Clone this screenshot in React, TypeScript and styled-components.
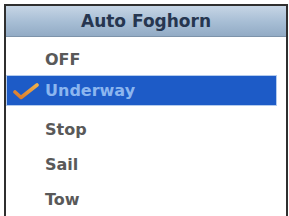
import styled, { createGlobalStyle } from 'styled-components';

const GlobalStyle = createGlobalStyle`
  html, body {
    margin: 0;
    padding: 0;
    background: #fff;
    overflow: hidden;
  }
`;

const Frame = styled.div`
  width: 280px;
  height: 214px;
  margin: 4px 0 0 4px;
  border: 2px solid #2f2f2f;
  border-bottom: none;
  background: #fff;
  font-family: 'DejaVu Sans', Verdana, sans-serif;
`;

const Header = styled.div`
  display: flex;
  align-items: center;
  justify-content: center;
  height: 30px;
  background: linear-gradient(#c6d5e5, #a6bdd4 55%, #92abc5);
  border-bottom: 1px solid #7d93aa;
  color: #263650;
  font-size: 17px;
  font-weight: 700;
`;

const List = styled.ul`
  list-style: none;
  margin: 0;
  padding: 5px 0 0;
`;

const Option = styled.li`
  display: flex;
  align-items: flex-start;
  height: 35px;
`;

const Label = styled.div<{ $active?: boolean }>`
  position: relative;
  display: flex;
  align-items: center;
  height: ${(p) => (p.$active ? '29px' : '35px')};
  margin: ${(p) => (p.$active ? '-1px 10px 0 1px' : '0 10px 0 1px')};
  padding-left: 38px;
  flex: 1;
  font-size: 16px;
  font-weight: 700;
  color: ${(p) => (p.$active ? '#8cb6ef' : '#595959')};
  background: ${(p) => (p.$active ? '#1d5bc7' : 'transparent')};
  box-shadow: ${(p) => (p.$active ? '0 0 0 1px #b3cbee' : 'none')};
`;

const Check = styled.svg`
  position: absolute;
  left: 6px;
  top: 7px;
`;

const options = ['OFF', 'Underway', 'Stop', 'Sail', 'Tow'];
const selected = 'Underway';

export default function App() {
  return (
    <>
      <GlobalStyle />
      <Frame>
        <Header>Auto Foghorn</Header>
        <List>
          {options.map((o) => (
            <Option key={o}>
              <Label $active={o === selected}>
                {o === selected && (
                  <Check width='26' height='17' viewBox='0 0 26 17'>
                    <defs>
                      <linearGradient id='chk' x1='0' y1='1' x2='1' y2='0'>
                        <stop offset='0' stopColor='#d9772a' />
                        <stop offset='1' stopColor='#f0b04a' />
                      </linearGradient>
                    </defs>
                    <path
                      d='M2 9 L8 14.5 L24 2'
                      fill='none'
                      stroke='url(#chk)'
                      strokeWidth='3.6'
                      strokeLinecap='round'
                      strokeLinejoin='round'
                    />
                  </Check>
                )}
                {o}
              </Label>
            </Option>
          ))}
        </List>
      </Frame>
    </>
  );
}
